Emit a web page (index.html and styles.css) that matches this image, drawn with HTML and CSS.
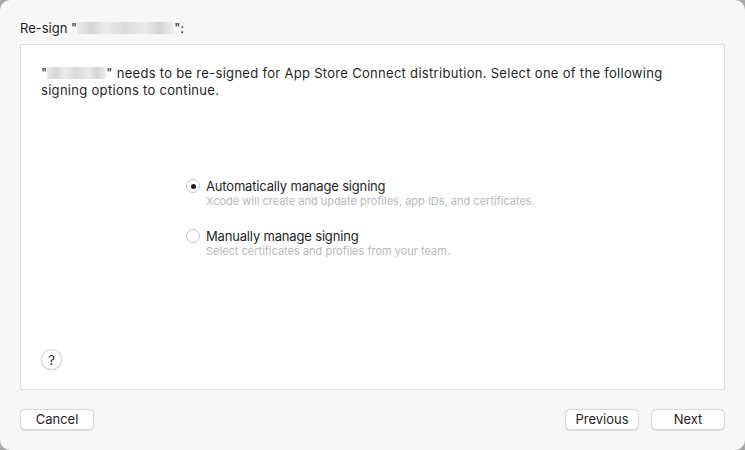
FILE: index.html
```html
<!DOCTYPE html>
<html>
<head>
<meta charset="utf-8">
<link rel="stylesheet" href="styles.css">
</head>
<body>
<div class="window">
  <div class="title">Re-sign "<span class="redact r-title"></span>":</div>
  <div class="panel">
    <p class="message">"<span class="redact r-msg"></span>" needs to be re-signed for App Store Connect distribution. Select one of the following signing options to continue.</p>
    <div class="options">
      <div class="option">
        <span class="radio checked"></span>
        <div class="option-text">
          <div class="option-label">Automatically manage signing</div>
          <div class="option-desc">Xcode will create and update profiles, app IDs, and certificates.</div>
        </div>
      </div>
      <div class="option">
        <span class="radio"></span>
        <div class="option-text">
          <div class="option-label">Manually manage signing</div>
          <div class="option-desc">Select certificates and profiles from your team.</div>
        </div>
      </div>
    </div>
    <div class="help-row"><span class="help">?</span></div>
  </div>
  <div class="footer">
    <button class="btn">Cancel</button>
    <div class="spacer"></div>
    <button class="btn">Previous</button>
    <button class="btn">Next</button>
  </div>
</div>
</body>
</html>
```
FILE: styles.css
```css
html, body {
  margin: 0;
  padding: 0;
  width: 745px;
  height: 450px;
  overflow: hidden;
  background: #a9a9a9;
}
.window {
  box-sizing: border-box;
  width: 745px;
  height: 450px;
  background: #f7f7f7;
  border-radius: 10px;
  padding: 0 20px 0 20px;
  display: flex;
  flex-direction: column;
  font-family: Inter, "Liberation Sans", Arial, sans-serif;
  font-size: 13px;
  color: #1f1f1f;
}
.title {
  height: 44px;
  box-sizing: border-box;
  padding-top: 20px;
  line-height: 16px;
}
.redact {
  display: inline-block;
  height: 12px;
  vertical-align: -1px;
  background: linear-gradient(90deg, #e9e9e9 0%, #d6d6d6 15%, #ececec 30%, #dadada 50%, #eaeaea 70%, #d4d4d4 85%, #efefef 100%);
}
.r-title { width: 97px; }
.r-msg { width: 59px; }
.panel {
  box-sizing: border-box;
  height: 346px;
  width: 705px;
  background: #ffffff;
  border: 1px solid #dcdcdc;
  display: flex;
  flex-direction: column;
  padding: 20px 20px 0 20px;
}
.message {
  margin: 0;
  line-height: 17px;
  width: 650px;
  letter-spacing: 0.3px;
}
.options {
  margin-top: 79px;
  padding-left: 145px;
  display: flex;
  flex-direction: column;
  gap: 20px;
}
.option {
  display: flex;
  align-items: flex-start;
  gap: 6px;
}
.radio {
  box-sizing: border-box;
  width: 14px;
  height: 14px;
  border-radius: 50%;
  border: 1px solid #c4c4c4;
  background: #fff;
  margin-top: 1px;
  position: relative;
  flex: none;
}
.radio.checked::after {
  content: "";
  position: absolute;
  left: 3.5px;
  top: 3.5px;
  width: 5px;
  height: 5px;
  border-radius: 50%;
  background: #1f1f1f;
}
.option-label {
  line-height: 16px;
  letter-spacing: -0.17px;
}
.option-desc {
  font-size: 11px;
  line-height: 14px;
  color: #b8b8b8;
}
.help-row {
  margin-top: auto;
  margin-bottom: 19px;
}
.help {
  box-sizing: border-box;
  display: flex;
  align-items: center;
  justify-content: center;
  width: 21px;
  height: 21px;
  border-radius: 50%;
  background: #fff;
  border: 1px solid #d4d4d4;
  box-shadow: 0 0.5px 1px rgba(0,0,0,0.15);
  font-size: 13px;
  color: #222;
}
.footer {
  display: flex;
  align-items: center;
  gap: 12px;
  padding-top: 19px;
}
.spacer { flex: 1; }
.btn {
  box-sizing: border-box;
  width: 74px;
  height: 21px;
  padding: 0;
  background: #fff;
  border: 1px solid #dadada;
  border-radius: 5px;
  box-shadow: 0 0.5px 1px rgba(0,0,0,0.12);
  font-family: Inter, "Liberation Sans", Arial, sans-serif;
  font-size: 13px;
  color: #1f1f1f;
  line-height: 19px;
}
```
